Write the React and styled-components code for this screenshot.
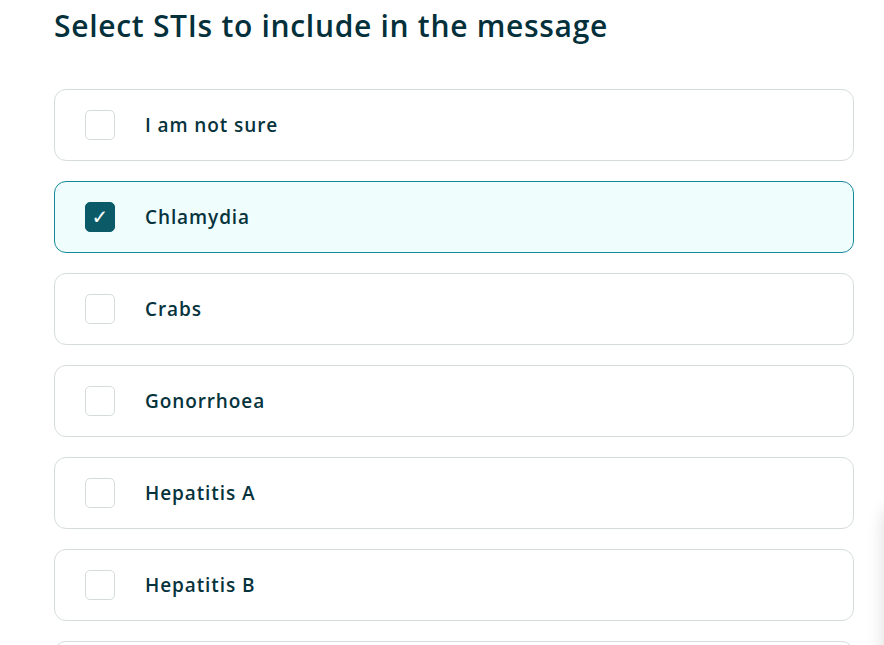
import { useState } from "react";
import styled, { createGlobalStyle } from "styled-components";

const GlobalStyle = createGlobalStyle`
  html, body {
    margin: 0;
    padding: 0;
    background: #ffffff;
    overflow: hidden;
  }
  * {
    box-sizing: border-box;
  }
`

const Page = styled.div`
  position: relative;
  width: 884px;
  height: 645px;
  overflow: hidden;
  padding: 0 30px 0 54px;
  font-family: "Open Sans", "Noto Sans", sans-serif;
  color: #06333c;
`

const Title = styled.h1`
  margin: 0;
  padding-top: 4px;
  font-size: 30px;
  line-height: 44px;
  font-weight: 600;
  letter-spacing: 0.7px;
  color: #03303a;
`

const List = styled.div`
  margin-top: 41px;
  display: flex;
  flex-direction: column;
  gap: 20px;
  width: 800px;
`

const Option = styled.label`
  display: flex;
  align-items: center;
  height: 72px;
  padding-left: 30px;
  border-radius: 12px;
  border: 1px solid ${({ $checked }) => ($checked ? "#168a98" : "#d6dcdd")};
  background: ${({ $checked }) => ($checked ? "#effdfd" : "#ffffff")};
  cursor: pointer;
  flex-shrink: 0;
`

const Box = styled.span`
  width: 30px;
  height: 30px;
  border-radius: 5px;
  border: 1px solid ${({ $checked }) => ($checked ? "#0b5a68" : "#d6dcdd")};
  background: ${({ $checked }) => ($checked ? "#0b5a68" : "#ffffff")};
  display: flex;
  align-items: center;
  justify-content: center;
  color: #ffffff;
  font-size: 20px;
  font-weight: 700;
  font-family: "DejaVu Sans", sans-serif;
  line-height: 1;
`

const Label = styled.span`
  margin-left: 30px;
  font-size: 19px;
  line-height: 24px;
  font-weight: 600;
  letter-spacing: 0.9px;
  color: #06333c;
`

const EdgeShadow = styled.div`
  position: absolute;
  top: 505px;
  left: 884px;
  width: 300px;
  height: 400px;
  border-radius: 18px;
  box-shadow: 0 0 18px rgba(0, 0, 0, 0.14);
`

const stis = [
  "I am not sure",
  "Chlamydia",
  "Crabs",
  "Gonorrhoea",
  "Hepatitis A",
  "Hepatitis B",
  "Hepatitis C",
];

const App = () => {
  const [selected, setSelected] = useState(["Chlamydia"]);

  const toggle = (name) => {
    setSelected((prev) =>
      prev.includes(name) ? prev.filter((n) => n !== name) : [...prev, name]
    );
  };

  return (
    <Page>
      <GlobalStyle />
      <Title>Select STIs to include in the message</Title>
      <List>
        {stis.map((name) => {
          const checked = selected.includes(name);
          return (
            <Option key={name} $checked={checked} onClick={() => toggle(name)}>
              <Box $checked={checked}>{checked ? "✓" : ""}</Box>
              <Label>{name}</Label>
            </Option>
          );
        })}
      </List>
      <EdgeShadow />
    </Page>
  );
};

export default App
